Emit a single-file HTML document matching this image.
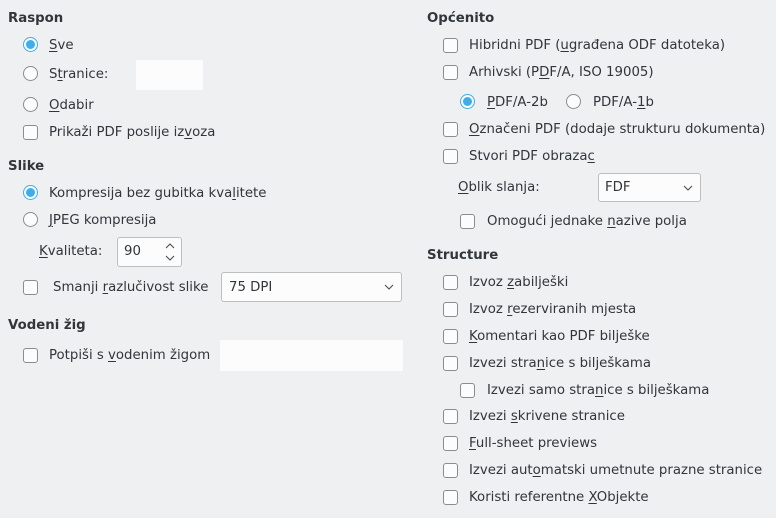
<!DOCTYPE html>
<html><head><meta charset="utf-8"><style>
body{margin:0;width:776px;height:518px;background:#eff0f1;font-family:"DejaVu Sans","Liberation Sans",sans-serif;font-size:13.3px;color:#31363b;position:relative;overflow:hidden}
.t{position:absolute;line-height:18px;white-space:nowrap;margin-top:1px}
.h{font-weight:bold}
.cb{position:absolute;width:13px;height:13px;border:1px solid #8a8d90;border-radius:3px;background:#fcfcfc}
.rb{position:absolute;width:13px;height:13px;border:1px solid #8a8d90;border-radius:50%;background:#fcfcfc}
.rb.on{border-color:#3daee9;background:#fcfcfc}
.rb.on::after{content:"";position:absolute;left:2px;top:2px;width:9px;height:9px;border-radius:50%;background:#3daee9}
.box{position:absolute;background:#fcfcfc}
.inp{position:absolute;background:#fcfcfc;border:1px solid #bcbebf;border-radius:3px;box-sizing:border-box}
u{text-decoration:underline;text-underline-offset:2px}
</style></head><body>

<div class="t h" style="left:8px;top:9px">Raspon</div>
<div class="rb on" style="left:23px;top:37px"></div><div class="t" style="left:49px;top:36px"><u>S</u>ve</div>
<div class="rb" style="left:23px;top:66px"></div><div class="t" style="left:49px;top:65px">S<u>t</u>ranice:</div>
<div class="box" style="left:136px;top:60px;width:67px;height:30px"></div>
<div class="rb" style="left:23px;top:97px"></div><div class="t" style="left:49px;top:96px"><u>O</u>dabir</div>
<div class="cb" style="left:23px;top:125px"></div><div class="t" style="left:49px;top:123px">Prikaži PDF poslije iz<u>v</u>oza</div>

<div class="t h" style="left:8px;top:157px">Slike</div>
<div class="rb on" style="left:23px;top:185px"></div><div class="t" style="left:49px;top:184px">Kompresija bez gubitka kva<u>l</u>itete</div>
<div class="rb" style="left:23px;top:212px"></div><div class="t" style="left:49px;top:211px"><u>J</u>PEG kompresija</div>
<div class="t" style="left:39px;top:242px"><u>K</u>valiteta:</div>
<div class="inp" style="left:117px;top:237px;width:65px;height:30px"></div>
<div class="t" style="left:124px;top:242px">90</div>
<svg style="position:absolute;left:164px;top:241px" width="12" height="22"><path d="M2 7 L6 3 L10 7 M2 15 L6 19 L10 15" fill="none" stroke="#4d4d4d" stroke-width="1.1"/></svg>
<div class="cb" style="left:23px;top:280px"></div><div class="t" style="left:53px;top:278px">Smanji <u>r</u>azlučivost slike</div>
<div class="inp" style="left:221px;top:272px;width:181px;height:30px"></div>
<div class="t" style="left:229px;top:278px">75 DPI</div>
<svg style="position:absolute;left:384px;top:283px" width="10" height="8"><path d="M1 2 L5 6 L9 2" fill="none" stroke="#4d4d4d" stroke-width="1.1"/></svg>

<div class="t h" style="left:8px;top:316px">Vodeni žig</div>
<div class="cb" style="left:23px;top:348px"></div><div class="t" style="left:49px;top:346px">Potpiši s <u>v</u>odenim žigom</div>
<div class="box" style="left:220px;top:340px;width:183px;height:31px"></div>

<div class="t h" style="left:427px;top:9px">Općenito</div>
<div class="cb" style="left:443px;top:38px"></div><div class="t" style="left:469px;top:36px">Hibridni PDF (<u>u</u>građena ODF datoteka)</div>
<div class="cb" style="left:443px;top:65px"></div><div class="t" style="left:469px;top:63px">Arhivski (P<u>D</u>F/A, ISO 19005)</div>
<div class="rb on" style="left:460px;top:94px"></div><div class="t" style="left:487px;top:93px"><u>P</u>DF/A-2b</div>
<div class="rb" style="left:566px;top:94px"></div><div class="t" style="left:593px;top:93px">PDF/A-<u>1</u>b</div>
<div class="cb" style="left:443px;top:122px"></div><div class="t" style="left:469px;top:120px"><u>O</u>značeni PDF (dodaje strukturu dokumenta)</div>
<div class="cb" style="left:443px;top:149px"></div><div class="t" style="left:469px;top:147px">Stvori PDF obraza<u>c</u></div>
<div class="t" style="left:458px;top:178px"><u>O</u>blik slanja:</div>
<div class="inp" style="left:598px;top:173px;width:103px;height:29px"></div>
<div class="t" style="left:605px;top:178px">FDF</div>
<svg style="position:absolute;left:683px;top:184px" width="10" height="8"><path d="M1 2 L5 6 L9 2" fill="none" stroke="#4d4d4d" stroke-width="1.1"/></svg>
<div class="cb" style="left:460px;top:214px"></div><div class="t" style="left:487px;top:212px">Omogući jednake <u>n</u>azive polja</div>

<div class="t h" style="left:427px;top:246px">Structure</div>
<div class="cb" style="left:443px;top:275px"></div><div class="t" style="left:469px;top:273px">Izvoz <u>z</u>abilješki</div>
<div class="cb" style="left:443px;top:302px"></div><div class="t" style="left:469px;top:300px">Izvoz <u>r</u>ezerviranih mjesta</div>
<div class="cb" style="left:443px;top:329px"></div><div class="t" style="left:469px;top:327px"><u>K</u>omentari kao PDF bilješke</div>
<div class="cb" style="left:443px;top:356px"></div><div class="t" style="left:469px;top:354px">Izvezi stra<u>n</u>ice s bilješkama</div>
<div class="cb" style="left:460px;top:383px"></div><div class="t" style="left:487px;top:381px">Izvezi samo stra<u>n</u>ice s bilješkama</div>
<div class="cb" style="left:443px;top:409px"></div><div class="t" style="left:469px;top:407px">Izvezi <u>s</u>krivene stranice</div>
<div class="cb" style="left:443px;top:436px"></div><div class="t" style="left:469px;top:434px"><u>F</u>ull-sheet previews</div>
<div class="cb" style="left:443px;top:463px"></div><div class="t" style="left:469px;top:461px">Izvezi aut<u>o</u>matski umetnute prazne stranice</div>
<div class="cb" style="left:443px;top:490px"></div><div class="t" style="left:469px;top:488px">Koristi referentne <u>X</u>Objekte</div>
</body></html>
